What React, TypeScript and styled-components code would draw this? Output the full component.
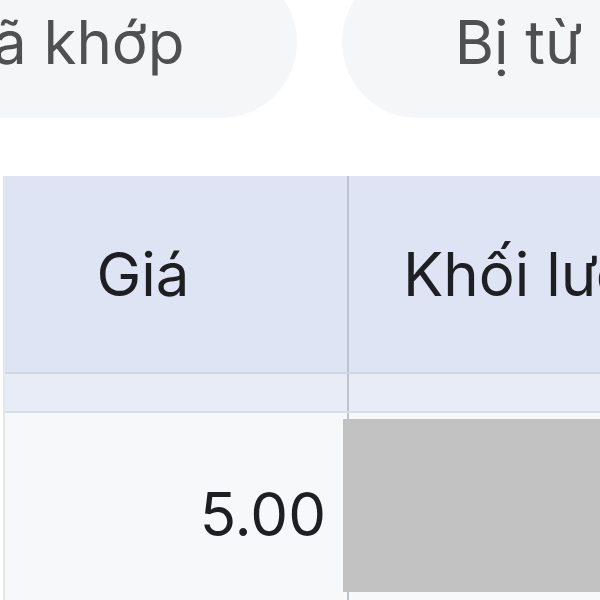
import styled, { createGlobalStyle } from "styled-components";

const GlobalStyle = createGlobalStyle`
  html, body {
    margin: 0;
    padding: 0;
    background: #ffffff;
  }
  body {
    font-family: Inter, "Noto Sans", "Liberation Sans", sans-serif;
  }
`;

const Page = styled.div`
  width: 600px;
  height: 600px;
  overflow: hidden;
  background: #ffffff;
`;

// tab pills sit partly above/left of the visible area (zoomed crop)
const Tabs = styled.div`
  display: flex;
  gap: 45px;
  margin: -34px 0 0 -163px;
`;

const Pill = styled.div<{ $width: number }>`
  flex: 0 0 ${(p) => p.$width}px;
  height: 152px;
  border-radius: 76px;
  background: #f5f6f8;
  display: flex;
  align-items: center;
  justify-content: center;
  color: #505052;
  font-size: 60px;
  white-space: nowrap;
`;

const Table = styled.div`
  margin: 58px 0 0 3px;
  display: flex;
  flex-direction: column;
  border-left: 2px solid #e2e6ee;
`;

const Row = styled.div<{ $bg: string; $height: number }>`
  display: flex;
  height: ${(p) => p.$height}px;
  background: ${(p) => p.$bg};
`;

const HeadRow = styled(Row)`
  border-bottom: 2px solid #cfd6e4;
`;

const SubRow = styled(Row)`
  border-bottom: 2px solid #d8dde6;
`;

const Cell = styled.div<{ $first?: boolean }>`
  box-sizing: border-box;
  flex: ${(p) => (p.$first ? "0 0 344px" : "1 0 300px")};
  border-right: ${(p) => (p.$first ? "2px solid #bcc3ce" : "none")};
  display: flex;
  align-items: center;
`;

const HeadCell = styled(Cell)`
  font-size: 60px;
  color: #1e1f22;
  justify-content: ${(p) => (p.$first ? "center" : "flex-start")};
  padding: ${(p) => (p.$first ? "0 66px 0 0" : "0 0 0 54px")};
  white-space: nowrap;
`;

const DataCell = styled(Cell)`
  align-items: flex-start;
  font-size: 60px;
  color: #1e1f22;
  justify-content: ${(p) => (p.$first ? "flex-end" : "flex-start")};
  padding: ${(p) => (p.$first ? "65px 21px 0 0" : "0")};
`;

const Redacted = styled.div`
  width: 300px;
  height: 173px;
  margin: 6px 0 0 -6px;
  background: #c2c2c2;
`;

export default function App() {
  return (
    <Page>
      <GlobalStyle />
      <Tabs>
        <Pill $width={460}>Đã khớp</Pill>
        <Pill $width={490}>Bị từ chối</Pill>
      </Tabs>
      <Table>
        <HeadRow $bg="#dee4f4" $height={196}>
          <HeadCell $first>Giá</HeadCell>
          <HeadCell>Khối lượng</HeadCell>
        </HeadRow>
        <SubRow $bg="#e8ecf6" $height={37}>
          <Cell $first />
          <Cell />
        </SubRow>
        <Row $bg="#f7f8fa" $height={200}>
          <DataCell $first>5.00</DataCell>
          <DataCell>
            <Redacted />
          </DataCell>
        </Row>
      </Table>
    </Page>
  );
}
